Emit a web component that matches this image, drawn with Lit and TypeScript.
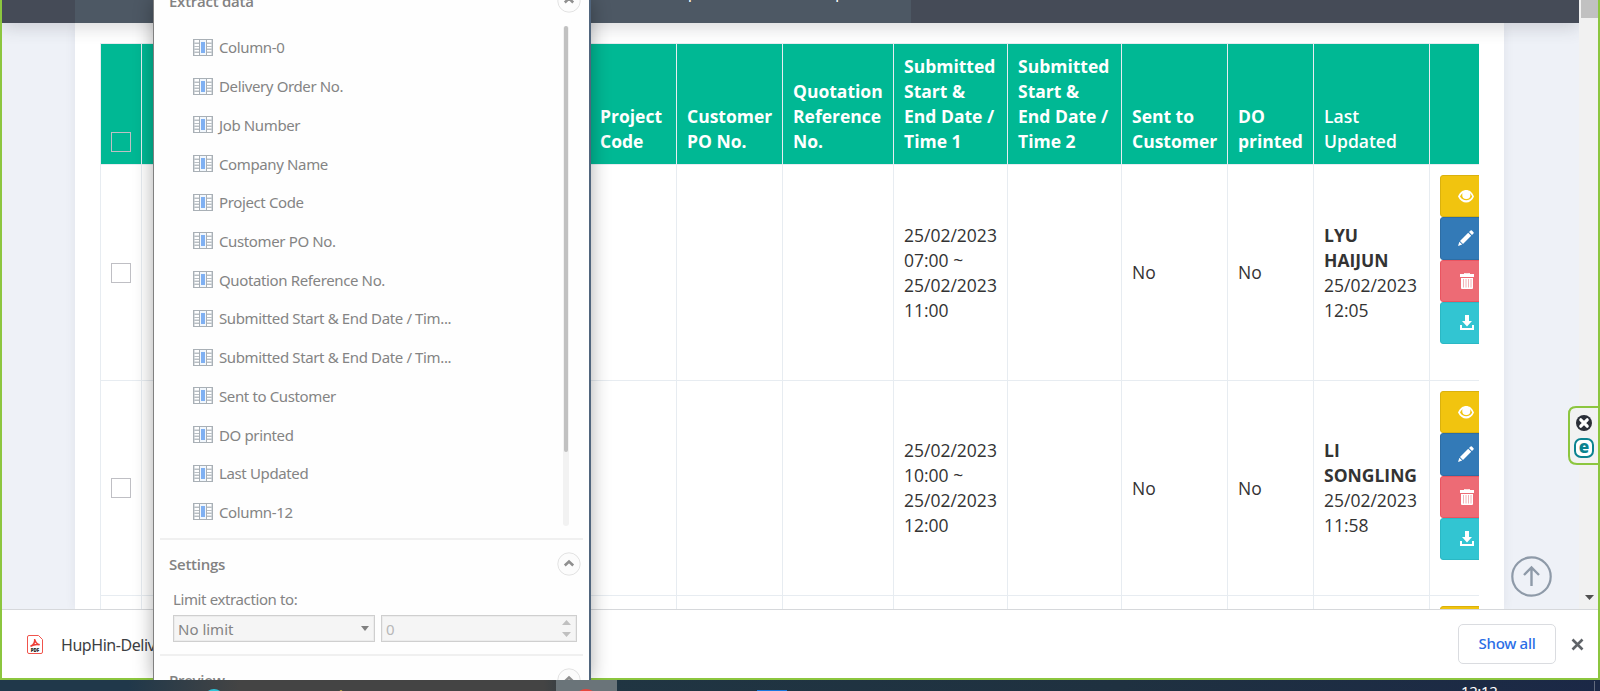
import { LitElement, html, css, svg } from "lit";
import { customElement } from "lit/decorators.js";

interface Row { start: string[]; who: string[]; when: string[]; }

const FIELDS = ["Column-0", "Delivery Order No.", "Job Number", "Company Name", "Project Code", "Customer PO No.",
  "Quotation Reference No.", "Submitted Start & End Date / Tim...", "Submitted Start & End Date / Tim...",
  "Sent to Customer", "DO printed", "Last Updated", "Column-12"];

const HEADS: string[][] = [["Project", "Code"], ["Customer", "PO No."], ["Quotation", "Reference", "No."],
  ["Submitted", "Start &", "End Date /", "Time 1"], ["Submitted", "Start &", "End Date /", "Time 2"],
  ["Sent to", "Customer"], ["DO", "printed"]];

const ROWS: Row[] = [
  { start: ["25/02/2023", "07:00 ~", "25/02/2023", "11:00"], who: ["LYU", "HAIJUN"], when: ["25/02/2023", "12:05"] },
  { start: ["25/02/2023", "10:00 ~", "25/02/2023", "12:00"], who: ["LI", "SONGLING"], when: ["25/02/2023", "11:58"] },
  { start: [], who: [], when: [] },
];

const lines = (l: string[]) => l.map((t) => html`<div>${t}</div>`);

const eye = svg`<path fill="#fff" fill-rule="evenodd" d="M0 8.500C2 4 5 2 8.200 2s6 2 7.800 6.500c-1.800 4-4.600 6-7.800 6S2 12.500 0 8.500zm2 0c1.500 2.500 3.500 3.700 6.200 3.700s4.700-1.200 6-3.700c-.7-1.700-1.400-2.600-2.300-3.300.3.700.5 1.200.5 1.900A4 4 0 0 1 8.300 11 4 4 0 0 1 4.200 7.100c0-.7.200-1.300.5-1.900C3.700 5.900 2.700 6.900 2 8.500z"/><path fill="#fff" d="M8.300 4.300a3 3 0 1 0 3 3H9.500L7.300 7.800z"/>`;
const pencil = svg`<path fill="#fff" d="M12.600.6a1 1 0 0 1 1.300 0l1.600 1.600a1 1 0 0 1 0 1.300L14 5 11 2zM10.200 2.800l3 3L5 14l-3-3zM1.400 11.800l2.800 2.800L0 16z"/>`;
const trash = svg`<path fill="#fff" fill-rule="evenodd" d="M5 2V.8Q5 0 5.800 0h4.400Q11 0 11 .8V1h4v3H1V1h4zm1.200-1h3.600V.8H6.200zM2 5h12v10q0 1-1 1H3q-1 0-1-1z"/><path d="M4.500 6v8.500M7 6v8.500M9.500 6v8.500M12 6v8.500" stroke="#f0a9ae" stroke-width=".9"/>`;
const download = svg`<path fill="#fff" d="M6 0h4v6h3L8 11.500 3 6h3zM1 10h2v3h10v-3h2v5H1z"/>`;
const ACTIONS = [["view", eye], ["edit", pencil], ["remove", trash], ["save", download]] as const;

@customElement("column-icon")
class ColumnIcon extends LitElement {
  static styles = css`:host{display:block;width:20px;height:17px}svg{display:block}`;
  render() {
    return html`<svg width="20" height="17" viewBox="0 0 20 17" shape-rendering="crispEdges">
      <rect x=".5" y=".5" width="19" height="16" fill="#fff" stroke="#a9b0b6"/>
      <path stroke="#b9bfc4" d="M1 4.500h5M1 7.500h5M1 10.500h5M1 13.500h5M14 4.500h5M14 7.500h5M14 10.500h5M14 13.500h5"/>
      <path stroke="#dde0e3" d="M1 3.500h5M1 9.500h5M1 12.500h5M14 3.500h5M14 9.500h5M14 12.500h5"/>
      <rect x="6.500" y=".5" width="7" height="16" fill="#f1f7fd" stroke="#a9b0b6"/>
      <path stroke="#c4cbd1" d="M1.500 1v15M18.500 1v15" opacity=".6"/>
      <rect x="8" y="3" width="4" height="11" fill="#7fb0f2"/>
    </svg>`;
  }
}

@customElement("extract-panel")
class ExtractPanel extends LitElement {
  static styles = css`
    :host{display:block;box-sizing:border-box;height:680px;background:#fefefe;border-left:1px solid #808080;border-right:2px solid #50657d;
      overflow:hidden;font:15px/20px "Noto Sans","Open Sans",sans-serif;color:#848484}
    .inner{display:flex;flex-direction:column;padding:0 6px;margin-top:-11px}
    .head{display:flex;justify-content:space-between;align-items:center;height:24px;padding:0 2px 0 9px;font-family:"Open Sans",sans-serif;font-weight:600;color:#828282;letter-spacing:-.25px}
    .list{box-sizing:border-box;display:flex;height:500px;margin-top:14px}
    .items{flex:1;padding:1px 0 0 33px}
    .item{display:flex;align-items:center;gap:6px;height:38.72px;letter-spacing:-.37px;white-space:nowrap}
    .track{width:6px;height:500px;margin:-1px 14px 0 0;background:#f2f2f2;border-radius:3px;display:flex;justify-content:center}
    .thumb{width:4px;height:426px;background:#c1c1c1;border-radius:2px}
    .rule{height:2px;background:#f0f0f0;margin-top:11px}
    .settings{margin-top:12px}
    .label{padding-left:13px;margin-top:13px;letter-spacing:-.38px}
    .controls{display:flex;gap:6px;padding:0 6px 0 13px;margin-top:6px}
    .box{box-sizing:border-box;height:27px;border:1px solid #cfcfcf;background:#f5f5f5;box-shadow:inset 0 0 0 1px #ececec;display:flex;align-items:center;justify-content:space-between;padding:0 5px 0 4px}
    .select{width:202px}.num{flex:1;color:#b8b8b8}
    .last{margin-top:12px}
    .preview{margin-top:12px}
    svg{display:block}
  `;
  private toggle() {
    return html`<svg width="24" height="24" viewBox="0 0 24 24"><circle cx="12" cy="12" r="11.200" fill="#fcfcfc" stroke="#e2e2e2"/>
      <path d="M7.800 13.500 12 9.500l4.200 4" fill="none" stroke="#8f8f8f" stroke-width="2.600"/></svg>`;
  }
  render() {
    return html`<div class="inner">
      <div class="head"><span>Extract data</span>${this.toggle()}</div>
      <div class="list"><div class="items">${FIELDS.map((f) => html`<div class="item"><column-icon></column-icon><span>${f}</span></div>`)}</div>
        <div class="track"><div class="thumb"></div></div></div>
      <div class="rule"></div>
      <div class="head settings"><span>Settings</span>${this.toggle()}</div>
      <div class="label">Limit extraction to:</div>
      <div class="controls">
        <div class="box select"><span>No limit</span><svg width="8" height="5"><path d="M0 0h8L4 5z" fill="#808080"/></svg></div>
        <div class="box num"><span>0</span><svg width="9" height="18"><path d="M0 5h9L4.500 0zM0 12h9L4.500 17z" fill="#c0c0c0"/></svg></div>
      </div>
      <div class="rule last"></div>
      <div class="head preview"><span>Preview</span>${this.toggle()}</div>
    </div>`;
  }
}

@customElement("order-table")
class OrderTable extends LitElement {
  static styles = css`
    :host{display:block;width:1379px;overflow:hidden;font:17.5px/25px "Open Sans",sans-serif;color:#333}
    .row{display:grid;grid-template-columns:41px 448px 87px 106px 111px 114px 114px 106px 86px 116px 50px;height:215px;border-top:1px solid #e7ecf1;box-sizing:border-box}
    .row.first{height:216px}
    .row.header{height:121px;background:#00b894;color:#fff;font-weight:700}
    .cell{box-sizing:border-box;border-left:1px solid #e7ecf1;padding:10px;display:flex;flex-direction:column;justify-content:center;white-space:nowrap;min-width:0}
    .header .cell{justify-content:flex-end}
    .header .soft{font-weight:600}
    .tick{box-sizing:border-box;width:20px;height:20px;border:1px solid #bfbfc4;flex:none}
    .header .tick{margin-bottom:2px}
    .who{font-weight:700}
    .row .actions{justify-content:flex-start;overflow:hidden}
    .btn{box-sizing:border-box;flex:none;width:60px;height:42.3px;border:1px solid;border-radius:3px;padding-left:17px;display:flex;align-items:center}
    .view{background:#f1c40f;border-color:#dab10d}.edit{background:#337ab7;border-color:#2e6da4}
    .remove{background:#ed6b75;border-color:#ea5460;padding-left:18px}.save{background:#32c5d2;border-color:#2bb8c4;padding-left:18px}
  `;
  render() {
    return html`
      <div class="row header"><div class="cell"><div class="tick"></div></div><div class="cell"></div>
        ${HEADS.map((h) => html`<div class="cell">${lines(h)}</div>`)}
        <div class="cell soft">${lines(["Last", "Updated"])}</div><div class="cell"></div></div>
      ${ROWS.map((r, i) => html`<div class="row ${i === 0 ? "first" : ""}">
        <div class="cell"><div class="tick"></div></div><div class="cell"></div><div class="cell"></div><div class="cell"></div><div class="cell"></div>
        <div class="cell">${lines(r.start)}</div><div class="cell"></div>
        <div class="cell">${r.start.length ? "No" : ""}</div><div class="cell">${r.start.length ? "No" : ""}</div>
        <div class="cell"><div class="who">${lines(r.who)}</div>${lines(r.when)}</div>
        <div class="cell actions">${ACTIONS.map(([c, g]) => html`<div class="btn ${c}"><svg width="16" height="16" viewBox="0 0 16 16">${g}</svg></div>`)}</div>
      </div>`)}`;
  }
}

@customElement("app-root")
class AppRoot extends LitElement {
  static styles = css`
    :host{display:block;position:relative;width:1600px;height:691px;overflow:hidden;font-family:"Open Sans",sans-serif}
    .frame{box-sizing:border-box;height:680px;border:2px solid #8cc63f;border-top:0;display:flex;flex-direction:column;background:#fff}
    .browser{height:609px;display:flex;overflow:hidden;background:#f1f1f1}
    .page{width:1577px;background:#eef1f7;overflow:hidden}
    .nav{height:23px;background:#454b57;box-shadow:0 4px 18px rgba(50,55,65,.2);position:relative;display:flex;padding-left:73px}
    .menu{width:836px;background:#4d5864;position:relative;overflow:hidden;color:#fff;font-size:17px;line-height:20px}
    .cut{margin:-18px 0 0 573px;display:block;white-space:pre}
    .card{width:1429px;height:586px;margin-left:73px;box-sizing:border-box;padding:20px 25px 0;background:#fff;box-shadow:0 0 10px rgba(60,70,90,.08);overflow:hidden}
    .scroll{width:17px;margin-left:2px;display:flex;flex-direction:column;justify-content:space-between;align-items:center}
    .grip{width:17px;height:18px;background:#c1c1c1}
    .down{margin-bottom:9px}
    .downloads{box-sizing:border-box;height:69px;border-top:1px solid #d6d8db;display:flex;align-items:center;padding:0 14px 0 25px;background:#fff}
    .name{font:16px/20px "Noto Sans",sans-serif;letter-spacing:-.45px;color:#3c4043;margin:2px 0 0 18px;flex:1}
    .all{box-sizing:border-box;width:98px;height:40px;border:1px solid #dadce0;border-radius:5px;color:#2a6de6;font:500 15px/36px "Noto Sans",sans-serif;letter-spacing:-.3px;text-align:center;margin-right:15px}
    .taskbar{height:11px;display:flex;justify-content:flex-end;background:linear-gradient(90deg,#20384a,#20384a 8%,#444 15%,#444 34%,#203542 37%,#1f3140 70%,#1b2846);position:relative;overflow:hidden}
    .active{position:absolute;left:556px;top:0;width:61px;height:11px;background:#6a7479}
    .apps{position:absolute;left:0;top:0}
    .clock{color:#fff;font:15px/20px "Noto Sans",sans-serif;letter-spacing:-.4px;width:133px;height:20px;margin-top:1px;border-right:1px solid #626a7c;margin-right:5px}
    .panel{position:absolute;left:153px;top:0;width:438px;box-shadow:0 0 18px rgba(0,0,0,.32)}
    .overlay{position:absolute;left:0;top:0;width:1600px;height:680px;overflow:hidden;pointer-events:none}
    .top{position:absolute;left:1511px;top:556px}
    .badge{position:absolute;left:1568px;top:406px;width:30px;height:59px}
  `;
  render() {
    return html`
      <div class="frame">
        <div class="browser">
          <div class="page">
            <div class="nav"><div class="menu"><span class="cut">,        p                               p</span></div></div>
            <div class="card"><order-table></order-table></div>
          </div>
          <div class="scroll"><div class="grip"></div><svg class="down" width="9" height="5"><path d="M0 0h9L4.500 5z" fill="#505050"/></svg></div>
        </div>
        <div class="downloads">
          <svg width="16" height="19" viewBox="0 0 16 19"><path d="M2 .5h9.500l4 4V17q0 1.500-1.500 1.500H2Q.5 18.500.5 17V2Q.5.5 2 .5z" fill="#fff" stroke="#f0544c"/>
            <path d="M3.500 11.300C6.500 10 8 7 7.700 4c.4 3 2 5 5 5.800-3-.7-6-.3-9.200 1.500z" fill="none" stroke="#ee3e36" stroke-width="1.500"/>
            <text x="8" y="16.500" text-anchor="middle" font-size="4.500" font-weight="800" fill="#222">PDF</text></svg>
          <span class="name">HupHin-Delivery</span><div class="all">Show all</div>
          <svg width="13" height="13"><path d="M1.500 1.500 11.500 11.500M11.500 1.500 1.500 11.500" stroke="#5f6368" stroke-width="2.600"/></svg>
        </div>
      </div>
      <div class="taskbar"><div class="active"></div>
        <svg class="apps" width="800" height="11"><circle cx="214" cy="19" r="10" fill="#2fc4d8"/><path d="M341 10l1.500 1h-3z" fill="#e0c040"/><circle cx="586" cy="21" r="12" fill="#e8453c"/><rect x="757" y="10" width="30" height="1" fill="#1a78e0"/></svg>
        <div class="clock">12:12</div></div>
      <div class="overlay">
        <extract-panel class="panel"></extract-panel>
        <svg class="top" width="41" height="41"><circle cx="20.500" cy="20.500" r="19.200" fill="none" stroke="#8e9aa8" stroke-width="2.200"/><path d="M20.500 30V12M13 19l7.500-7.500L28 19" fill="none" stroke="#8e9aa8" stroke-width="2.400"/></svg>
        <svg class="badge" viewBox="0 0 30 59"><path d="M31 1H8Q1 1 1 8V50Q1 58 9 58H31" fill="#f2f2f2" stroke="#8cc63f" stroke-width="2"/>
          <circle cx="16" cy="17" r="8" fill="#2b2f38"/><path d="M12.800 13.800l6.400 6.400M19.200 13.800l-6.400 6.400" stroke="#fff" stroke-width="3.200" stroke-linecap="round"/>
          <rect x="7" y="33" width="18" height="18" rx="6" fill="#fff" stroke="#0b8390" stroke-width="2"/>
          <text x="16" y="47" text-anchor="middle" font-size="17" font-weight="800" fill="#0b8390">e</text></svg>
      </div>`;
  }
}
